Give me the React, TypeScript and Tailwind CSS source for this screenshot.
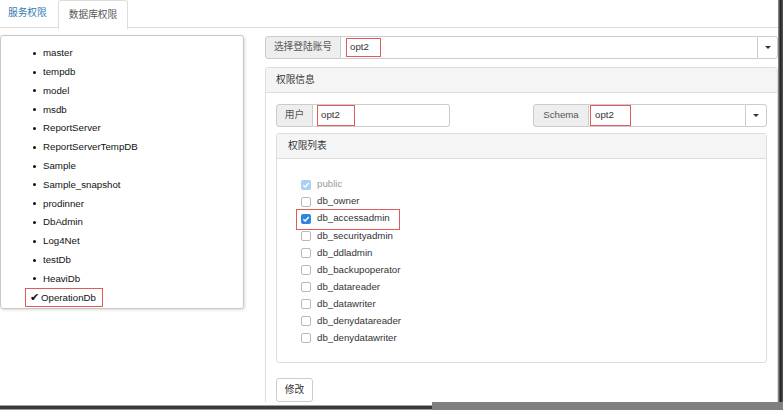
import React from "react";

const databases = [
	"master",
	"tempdb",
	"model",
	"msdb",
	"ReportServer",
	"ReportServerTempDB",
	"Sample",
	"Sample_snapshot",
	"prodinner",
	"DbAdmin",
	"Log4Net",
	"testDb",
	"HeaviDb",
];

const roles = [
	{ name: "public", checked: true, disabled: true },
	{ name: "db_owner" },
	{ name: "db_accessadmin", checked: true, marked: true },
	{ name: "db_securityadmin" },
	{ name: "db_ddladmin" },
	{ name: "db_backupoperator" },
	{ name: "db_datareader" },
	{ name: "db_datawriter" },
	{ name: "db_denydatareader" },
	{ name: "db_denydatawriter" },
];

function Caret() {
	return <span className="w-0 h-0 border-l-[3px] border-r-[3px] border-t-[3px] border-l-transparent border-r-transparent border-t-[#333]" />;
}

function CheckBox({ checked, disabled }: { checked?: boolean; disabled?: boolean }) {
	if (!checked) {
		return <span className="w-[10px] h-[10px] rounded-[2px] border border-[#b9b9b9] bg-white shrink-0" />;
	}
	return (
		<span
			className={`w-[10px] h-[10px] rounded-[2px] shrink-0 flex items-center justify-center ${
				disabled ? "bg-[#a9cff2]" : "bg-[#2f86de]"
			}`}
		>
			<svg width="8" height="8" viewBox="0 0 8 8">
				<path d="M1.3 4.2 L3.2 6 L6.8 2" fill="none" stroke="white" strokeWidth="1.4" />
			</svg>
		</span>
	);
}

function Marked({ children, className }: { children: React.ReactNode; className?: string }) {
	return <span className={`flex items-center border border-[#e25a5a] ${className ?? ""}`}>{children}</span>;
}

export default function App() {
	return (
		<div className="w-[783px] h-[410px] flex flex-col bg-white overflow-hidden text-[9.7px] text-[#333] font-['Liberation_Sans','Noto_Sans_CJK_SC',sans-serif]">
			<div className="flex flex-1 min-h-0">
				<div className="w-[778px] flex flex-col">
					{/* tabs */}
					<div className="h-[28px] flex border-b border-[#dddddd] shrink-0">
						<div className="w-[58px] flex items-center pl-[8px] text-[#337ab7]">服务权限</div>
						<div className="w-[70px] h-[29px] flex items-center justify-center border border-b-0 border-[#dddddd] rounded-t-[3px] bg-white text-[#555]">
							数据库权限
						</div>
					</div>

					<div className="flex flex-1 min-h-0 pt-[7px]">
						{/* database list */}
						<div className="w-[244px] h-[274px] border border-[#c9c9c9] rounded-[3px] shadow-[1px_1px_3px_rgba(0,0,0,0.15)] pt-[8px] text-[#111]">
							{databases.map((db) => (
								<div className="h-[18.8px] flex items-center" key={db}>
									<span className="ml-[32px] w-[3px] h-[3px] rounded-full bg-[#111]" />
									<span className="ml-[7px]">{db}</span>
								</div>
							))}
							<div className="h-[19px] flex items-center">
								<Marked className="ml-[24px] h-[19px] w-[78px]">
									<span className="ml-[4px] text-[11px] leading-none">✔</span>
									<span className="ml-[2px]">OperationDb</span>
								</Marked>
							</div>
						</div>

						{/* right side */}
						<div className="ml-[21px] w-[513px] flex flex-col">
							<div className="mt-[1px] h-[23px] flex shrink-0">
								<div className="w-[76px] flex items-center justify-center bg-[#eeeeee] border border-[#cccccc] rounded-l-[3px] text-[#555]">
									选择登陆账号
								</div>
								<div className="flex-1 flex items-center border-y border-[#cccccc] pl-[5px]">
									<Marked className="h-[19px] w-[35px] pl-[3px]">opt2</Marked>
								</div>
								<div className="w-[21px] flex items-center justify-center border border-[#cccccc] rounded-r-[3px]">
									<Caret />
								</div>
							</div>

							<div className="mt-[8px] flex-1 flex flex-col border border-b-0 border-[#dddddd] rounded-t-[3px]">
								<div className="h-[25px] flex items-center pl-[10px] bg-[#f5f5f5] border-b border-[#dddddd] shrink-0">
									权限信息
								</div>
								<div className="px-[10px] pt-[11px]">
									<div className="h-[23px] flex">
										<div className="w-[257px] flex">
											<div className="w-[37px] flex items-center justify-center bg-[#eeeeee] border border-[#cccccc] rounded-l-[3px] text-[#555]">
												用户
											</div>
											<div className="w-[137px] flex items-end border border-l-0 border-[#cccccc] rounded-r-[3px] pl-[4px]">
												<Marked className="h-[21px] w-[38px] pl-[3px]">opt2</Marked>
											</div>
										</div>
										<div className="flex">
											<div className="w-[56px] flex items-center justify-center bg-[#eeeeee] border border-[#cccccc] rounded-l-[3px] text-[#555]">
												Schema
											</div>
											<div className="w-[156px] flex items-end border-y border-[#cccccc]">
												<Marked className="h-[21px] w-[41px] pl-[4px] ml-[1px]">opt2</Marked>
											</div>
											<div className="w-[22px] flex items-center justify-center border border-[#cccccc] rounded-r-[3px]">
												<Caret />
											</div>
										</div>
									</div>

									<div className="mt-[6px] border border-[#dddddd] rounded-[3px]">
										<div className="h-[25px] flex items-center pl-[11px] bg-[#f5f5f5] border-b border-[#dddddd]">权限列表</div>
										<div className="pt-[17px] pb-[15px] pl-[24px]">
											{roles.map((r) => (
												<div className="relative h-[17.1px] flex items-center" key={r.name}>
													<CheckBox checked={r.checked} disabled={r.disabled} />
													<span className={`ml-[6px] ${r.disabled ? "text-[#9a9a9a]" : ""}`}>{r.name}</span>
													{r.marked && (
														<span className="absolute left-[-5px] top-[-1.5px] w-[104px] h-[21px] border border-[#e25a5a]" />
													)}
												</div>
											))}
										</div>
									</div>

									<button className="mt-[15px] w-[37px] h-[24px] flex items-center justify-center border border-[#cccccc] rounded-[3px] bg-white text-[#333]">
										修改
									</button>
								</div>
							</div>
						</div>
					</div>
				</div>
				<div className="w-[5px] bg-linear-to-r from-[#9a9a9a] via-[#262626] to-[#5a5a5a]" />
			</div>
			<div className="h-[8px] flex shrink-0">
				<div className="w-[432px] flex flex-col">
					<div className="h-[3px] bg-white" />
					<div className="h-[1px] bg-[#a0a0a0]" />
					<div className="h-[3px] bg-[#3a3a3a]" />
					<div className="h-[1px] bg-[#9a9a9a]" />
				</div>
				<div className="flex-1 bg-[#808080]" />
			</div>
		</div>
	);
}
